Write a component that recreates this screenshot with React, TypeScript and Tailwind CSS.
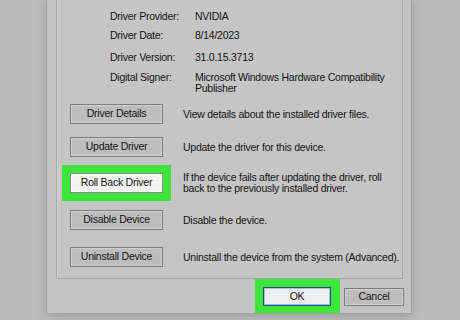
import React from "react";

const font = { fontFamily: '"Liberation Sans", Arial, sans-serif' };

interface ActionRowProps {
  label: string;
  lines: string[];
  highlight?: boolean;
}

const ActionRow: React.FC<ActionRowProps> = ({ label, lines, highlight }) => {
  const button = (
    <div
      className={
        highlight
          ? "w-[93px] h-[20px] flex items-center justify-center border border-[#8a8a8a] bg-[#f3f3f3] shadow-[inset_0_0_0_1px_#ffffff]"
          : "w-[93px] h-[20px] flex items-center justify-center border border-[#7c7c7c] bg-[#bdbdbd] shadow-[inset_0_0_0_1px_#d0d0d0]"
      }
    >
      {label}
    </div>
  );
  return (
    <div className="flex items-center">
      {highlight ? (
        <div className="-mx-[8px] -my-[8px] px-[8px] py-[8px] bg-[#3fe53b]">{button}</div>
      ) : (
        button
      )}
      <div className={highlight ? "ml-[20px] leading-[11px]" : "ml-[20px] leading-[12px]"}>
        {lines.map((l) => (
          <div key={l}>{l}</div>
        ))}
      </div>
    </div>
  );
};

export default function App() {
  return (
    <div
      className="w-[460px] h-[320px] overflow-hidden bg-[#bbbbbb] flex text-[10.5px] tracking-[-0.25px] whitespace-nowrap text-[#141414]"
      style={font}
    >
      <div className="ml-[46px] w-[366px] h-[314px] shrink-0 flex flex-col bg-[#c3c3c3] border-x border-b border-[#a2a2a2] shadow-[0_2px_10px_rgba(0,0,0,0.16)]">
        <div className="ml-[9px] mr-[8px] h-[279px] shrink-0 flex flex-col bg-[#c5c5c5] border-x border-b border-[#a6a6a6] shadow-[inset_1px_0_0_#d4d4d4]">
          <div className="pl-[53px] pt-[10px] flex flex-col leading-[12px]">
            <div className="flex">
              <div className="w-[85px]">Driver Provider:</div>
              <div>NVIDIA</div>
            </div>
            <div className="flex mt-[7px]">
              <div className="w-[85px]">Driver Date:</div>
              <div>8/14/2023</div>
            </div>
            <div className="flex mt-[10px]">
              <div className="w-[85px]">Driver Version:</div>
              <div>31.0.15.3713</div>
            </div>
            <div className="flex mt-[9px] leading-[11px]">
              <div className="w-[85px]">Digital Signer:</div>
              <div>
                <div>Microsoft Windows Hardware Compatibility</div>
                <div>Publisher</div>
              </div>
            </div>
          </div>
          <div className="pl-[13px] mt-[10px] flex flex-col">
            <ActionRow label="Driver Details" lines={["View details about the installed driver files."]} />
            <div className="h-[13px]" />
            <ActionRow label="Update Driver" lines={["Update the driver for this device."]} />
            <div className="h-[15px]" />
            <ActionRow
              label="Roll Back Driver"
              highlight
              lines={["If the device fails after updating the driver, roll", "back to the previously installed driver."]}
            />
            <div className="h-[16px]" />
            <ActionRow label="Disable Device" lines={["Disable the device."]} />
            <div className="h-[17px]" />
            <ActionRow label="Uninstall Device" lines={["Uninstall the device from the system (Advanced)."]} />
          </div>
        </div>
        <div className="flex-1 flex justify-end items-start pr-[7px]">
          <div className="w-[85px] h-[34px] bg-[#3fe53b] pl-[8px] pt-[8px]">
            <div className="w-[68px] h-[19px] flex items-center justify-center border border-[#1f4f7e] bg-[#eeeeee] shadow-[inset_0_0_0_1px_#9fc3e6]">
              OK
            </div>
          </div>
          <div className="ml-[4px] mt-[9px] w-[60px] h-[18px] flex items-center justify-center border border-[#7c7c7c] bg-[#bdbdbd] shadow-[inset_0_0_0_1px_#d0d0d0]">
            Cancel
          </div>
        </div>
      </div>
    </div>
  );
}
